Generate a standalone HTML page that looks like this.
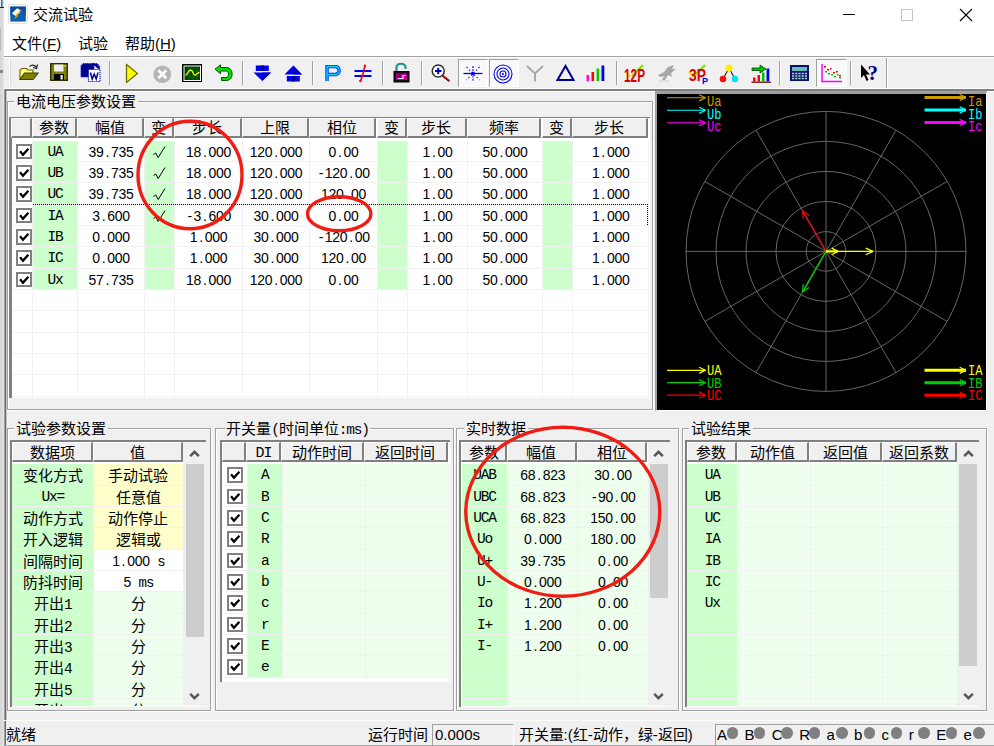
<!DOCTYPE html>
<html lang="zh-CN"><head><meta charset="utf-8"><title>交流试验</title>
<style>
html,body{margin:0;padding:0;overflow:hidden}
body{width:994px;height:746px;position:relative;overflow:hidden;background:#f0f0f0;font-family:"Liberation Sans",sans-serif;font-size:15px;color:#000}
div,svg{position:absolute;box-sizing:border-box}
.c{text-align:center;white-space:nowrap;overflow:hidden}
.l{text-align:left;white-space:nowrap}
.s{font-family:"Liberation Sans",sans-serif;font-size:15px}
.m{font-family:"Liberation Mono",monospace;font-size:14.5px;letter-spacing:-1.2px}
.hd.m{padding-top:1px}
.n{font-family:"Liberation Sans",sans-serif;font-size:14px;letter-spacing:-0.28px}
.n i{display:inline-block;width:7.5px;text-align:center;font-style:normal;white-space:pre}
.n i.m{font-size:14px;letter-spacing:0}
.hd{background:#f0f0f0;border-top:1px solid #fff;border-left:1px solid #fff;border-bottom:2px solid #808080;border-right:2px solid #808080;text-align:center;white-space:nowrap;overflow:hidden;font-size:15px}
.cb{background:#fff;border:2px solid #808080}
</style></head><body>
<div style="left:0px;top:0px;width:4px;height:746px;background:linear-gradient(90deg,#d6d6d6,#dcdcdc 60%,#e8e8e8)"></div>
<div style="left:0px;top:0px;width:4px;height:7px;background:#f4f0d8"></div>
<div style="left:1.2px;top:0px;width:0.7px;height:7px;background:#a0522d"></div>
<div style="left:2.3px;top:0px;width:0.8px;height:7px;background:#6aa8e8"></div>
<div style="left:0px;top:7px;width:4px;height:1px;background:#202020"></div>
<div style="left:0px;top:28px;width:1px;height:22px;background:#f4f4f4;border-right:1px solid #b8b8b8"></div>
<div style="left:0px;top:70px;width:3px;height:3px;background:#888"></div>
<div style="left:4px;top:0px;width:990px;height:56px;background:#fff"></div>
<svg style="left:8px;top:4px" width="20" height="20" viewBox="0 0 20 20">
<rect x="0.5" y="0.5" width="19" height="19" rx="1.5" fill="#fafafa" stroke="#e2e2e2"/>
<rect x="2.3" y="2.6" width="15.5" height="15" fill="#0a62b0"/><rect x="2.3" y="2.6" width="15.5" height="5" fill="#0b4c9b"/><rect x="2.3" y="7.6" width="15.5" height="4" fill="#0b58a6"/>
<path d="M4 9.3 L9.2 4.2 L12.6 6.2 L10.5 9.5 L8.6 12.2 L6 11 Z" fill="#fff"/>
<path d="M15 6 L11.6 8 L12.6 9 L9.2 11 L10.2 12 L6 15 L8.2 11.6 L7.6 10.6 L10.8 8.6 L10.4 7.6 Z" fill="#f7a21b"/>
</svg>
<div class="l s" style="left:33px;top:4px;width:80px;height:22px;line-height:22px;">交流试验</div>
<div style="left:843px;top:14px;width:12px;height:1px;background:#000"></div>
<div style="left:900.8px;top:9px;width:12px;height:12px;border:1px solid #c4c4c4"></div>
<svg style="left:959px;top:8px" width="14" height="14" viewBox="0 0 14 14"><path d="M1 1 L13 13 M13 1 L1 13" stroke="#000" stroke-width="1.1" fill="none"/></svg>
<div class="l s" style="left:12px;top:33px;width:60px;height:22px;line-height:22px;">文件(<u>F</u>)</div>
<div class="l s" style="left:78px;top:33px;width:40px;height:22px;line-height:22px;">试验</div>
<div class="l s" style="left:125px;top:33px;width:60px;height:22px;line-height:22px;">帮助(<u>H</u>)</div>
<div style="left:4px;top:56px;width:990px;height:1px;background:#a0a0a0"></div>
<div style="left:4px;top:57px;width:990px;height:1px;background:#fff"></div>
<div style="left:9px;top:59px;width:1px;height:27px;background:#fff"></div>
<div style="left:10px;top:59px;width:1px;height:27px;background:#dcdcdc"></div>
<div style="left:885.5px;top:58px;width:1px;height:30px;background:#a0a0a0"></div>
<div style="left:886.5px;top:58px;width:1px;height:30px;background:#fff"></div>
<div style="left:109.2px;top:61px;width:1px;height:24px;background:#a0a0a0"></div>
<div style="left:110.2px;top:61px;width:1px;height:24px;background:#fff"></div>
<div style="left:241.5px;top:61px;width:1px;height:24px;background:#a0a0a0"></div>
<div style="left:242.5px;top:61px;width:1px;height:24px;background:#fff"></div>
<div style="left:312px;top:61px;width:1px;height:24px;background:#a0a0a0"></div>
<div style="left:313px;top:61px;width:1px;height:24px;background:#fff"></div>
<div style="left:382px;top:61px;width:1px;height:24px;background:#a0a0a0"></div>
<div style="left:383px;top:61px;width:1px;height:24px;background:#fff"></div>
<div style="left:420.5px;top:61px;width:1px;height:24px;background:#a0a0a0"></div>
<div style="left:421.5px;top:61px;width:1px;height:24px;background:#fff"></div>
<div style="left:615.5px;top:61px;width:1px;height:24px;background:#a0a0a0"></div>
<div style="left:616.5px;top:61px;width:1px;height:24px;background:#fff"></div>
<div style="left:779px;top:61px;width:1px;height:24px;background:#a0a0a0"></div>
<div style="left:780px;top:61px;width:1px;height:24px;background:#fff"></div>
<div style="left:849.5px;top:61px;width:1px;height:24px;background:#a0a0a0"></div>
<div style="left:850.5px;top:61px;width:1px;height:24px;background:#fff"></div>
<div style="left:457.5px;top:58.5px;width:30.5px;height:28.5px;background:#f9f9f9;border-top:1px solid #a0a0a0;border-left:1px solid #a0a0a0;border-right:1px solid #fff;border-bottom:1px solid #fff"></div>
<div style="left:488.5px;top:58.5px;width:30.5px;height:28.5px;background:#f9f9f9;border-top:1px solid #a0a0a0;border-left:1px solid #a0a0a0;border-right:1px solid #fff;border-bottom:1px solid #fff"></div>
<div style="left:815.5px;top:58.5px;width:31px;height:28.5px;background:#f9f9f9;border-top:1px solid #a0a0a0;border-left:1px solid #a0a0a0;border-right:1px solid #fff;border-bottom:1px solid #fff"></div>
<svg style="left:18.5px;top:62.5px" width="20" height="18" viewBox="0 0 20 18"><path d="M1 16.5 L1 7 L3 5.5 L7.5 5.5 L9 7 L14 7 L14 10" fill="#ffff80" stroke="#6b6b00" stroke-width="1.2"/><path d="M1 16.5 L5.5 10 L19 10 L14 16.5 Z" fill="#808000" stroke="#404000" stroke-width="1.2"/><path d="M10.5 3.5 Q14 0.5 17 4" fill="none" stroke="#202020" stroke-width="1.2"/><path d="M18.5 1.5 L17.5 5.5 L14 4.5" fill="none" stroke="#202020" stroke-width="1.2"/></svg>
<svg style="left:50px;top:63px" width="18" height="18" viewBox="0 0 18 18"><rect x="0.7" y="0.7" width="16.6" height="16.6" fill="#808000" stroke="#303000" stroke-width="1.4"/><rect x="4" y="1.5" width="9.5" height="7" fill="#f0f0f0"/><rect x="4" y="11" width="10" height="6" fill="#000"/><rect x="10.5" y="12" width="2.3" height="4.5" fill="#e8e8e8"/><rect x="14.5" y="2" width="1.6" height="1.6" fill="#e0e0e0"/></svg>
<svg style="left:79.5px;top:61.5px" width="22" height="21" viewBox="0 0 22 21"><path d="M3 1.5 L14 1.5 L14 15 L1 15 L1 4 Z" fill="#00008b" stroke="#2020ff" stroke-width="1.2" stroke-dasharray="1.2 0.8"/><path d="M12 1.5 L17 1.5 L19.5 4.5 L19.5 8" fill="#00008b" stroke="#2020ff" stroke-width="1.2" stroke-dasharray="1.2 0.8"/><rect x="8.5" y="7.5" width="11.5" height="12" fill="#fff" stroke="#1010e0" stroke-width="1.2" stroke-dasharray="1.2 0.8"/><path d="M10.5 10.5 L12.2 17 L14.2 12 L16.2 17 L18 10.5" fill="none" stroke="#00008b" stroke-width="1.5"/></svg>
<svg style="left:124.5px;top:62.5px" width="14" height="21" viewBox="0 0 14 21"><path d="M1.5 1.5 L12.5 10.5 L1.5 19.5 Z" fill="#ffff00" stroke="#6b6b00" stroke-width="1.3"/></svg>
<svg style="left:152.5px;top:64.5px" width="19" height="19" viewBox="0 0 19 19"><circle cx="9.3" cy="9.3" r="8.8" fill="#b4b4b4"/><path d="M5.3 5.3 L13.3 13.3 M13.3 5.3 L5.3 13.3" stroke="#fff" stroke-width="2.8" fill="none"/></svg>
<svg style="left:181.5px;top:63.5px" width="20.5" height="18.5" viewBox="0 0 20.5 18.5"><rect x="0" y="0" width="20.5" height="18.5" fill="#000"/><rect x="2" y="2" width="16.5" height="14.5" fill="#004000" stroke="#fff" stroke-width="1"/><path d="M3 7 H18 M3 12 H18 M7 3 V16 M11 3 V16 M15 3 V16" stroke="#008000" stroke-width="0.8"/><path d="M3.5 11 C6 11 6 6 8.5 6 S11 11 13 11 S15 8.5 17.5 8.5" stroke="#ffff00" stroke-width="1.3" fill="none"/></svg>
<svg style="left:213.5px;top:64px" width="19.5" height="18" viewBox="0 0 19.5 18"><path d="M1 5.2 L6.5 0.8 L6.5 3.5 L12.5 3.5 C20 3.5 20 16.5 12.5 16.5 L7.5 16.5 L7.5 13.5 L12 13.5 C15.5 13.5 15.5 7 12 7 L6.5 7 L6.5 9.7 Z" fill="#00e000" stroke="#005000" stroke-width="1"/></svg>
<svg style="left:252.5px;top:65px" width="19" height="17" viewBox="0 0 19 17"><rect x="2.8" y="0.5" width="13" height="5.5" fill="#0000f0"/><rect x="7.5" y="0.5" width="3.5" height="5.5" fill="#000090"/><path d="M0.5 7.5 L18 7.5 L9.3 16 Z" fill="#0000f0"/><path d="M9.3 7.5 L18 7.5 L9.3 16 Z" fill="#0000c0"/></svg>
<svg style="left:283.5px;top:65px" width="19" height="17" viewBox="0 0 19 17"><path d="M0.5 9.5 L18 9.5 L9.3 0.5 Z" fill="#0000f0"/><path d="M9.3 0.5 L18 9.5 L9.3 9.5 Z" fill="#0000c0"/><rect x="2.8" y="11" width="13" height="5.5" fill="#0000f0"/><rect x="7.5" y="11" width="3.5" height="5.5" fill="#000090"/></svg>
<svg style="left:324.5px;top:65px" width="16" height="17" viewBox="0 0 16 17"><path d="M2 16 V1.5 H10 C15.5 1.5 15.5 9.5 10 9.5 H2" fill="none" stroke="#0030ff" stroke-width="3.4"/><path d="M2 16 V1.5 H10 C15.5 1.5 15.5 9.5 10 9.5 H2" fill="none" stroke="#00e0ff" stroke-width="1.3"/></svg>
<svg style="left:353.5px;top:64px" width="18" height="19" viewBox="0 0 18 19"><path d="M0.5 7 H17.5 M0.5 12 H17.5" stroke="#0000f0" stroke-width="2.2"/><path d="M11 1 L9.5 8 L8.5 11 L6.5 17.5" stroke="#f00" stroke-width="1.6" fill="none"/><circle cx="6.3" cy="17" r="1.2" fill="#f00"/><circle cx="11" cy="1.8" r="1.2" fill="#f00"/></svg>
<svg style="left:392.5px;top:62px" width="17" height="20.5" viewBox="0 0 17 20.5"><path d="M3.5 9.5 V5.5 C3.5 0.5 12.5 0.5 12.5 5.5 V7" fill="none" stroke="#209090" stroke-width="2.2"/><rect x="1" y="9.5" width="15" height="10.5" fill="#181018" stroke="#000" stroke-width="1"/><rect x="3" y="11.5" width="11" height="6.5" fill="#c000a0"/><path d="M5 16.5 H10 V13.5 H12.5" stroke="#ffd0ff" stroke-width="1.2" fill="none"/><rect x="4" y="12.5" width="4" height="3" fill="#600050"/></svg>
<svg style="left:430.5px;top:64px" width="20" height="18" viewBox="0 0 20 18"><circle cx="7.2" cy="7" r="6" fill="#fff" stroke="#303030" stroke-width="1.5"/><path d="M4 7 H10.5 M7.2 3.8 V10.2" stroke="#0000c0" stroke-width="2"/><path d="M11.5 11.5 L18.5 17" stroke="#c01010" stroke-width="2.2"/><path d="M11.5 12.2 L17.8 17.5" stroke="#400000" stroke-width="0.8"/></svg>
<svg style="left:462.5px;top:63.5px" width="20" height="19" viewBox="0 0 20 19"><path d="M0.5 9.5 H19.5" stroke="#0000f0" stroke-width="1.3"/><path d="M10 2 V17" stroke="#0000f0" stroke-width="1.1" stroke-dasharray="2 1.2"/><path d="M3.5 3 L16.5 16 M16.5 3 L3.5 16" stroke="#0000f0" stroke-width="1.1" stroke-dasharray="1.4 2.2"/><circle cx="10" cy="9.5" r="1.7" fill="#0000f0"/></svg>
<svg style="left:493px;top:63.5px" width="20" height="20" viewBox="0 0 20 20"><g fill="none" stroke="#0000f0" stroke-width="1.05"><circle cx="10" cy="10" r="9"/><circle cx="10" cy="10" r="6"/><circle cx="10" cy="10" r="3"/></g><circle cx="10" cy="10" r="1" fill="#0000f0"/></svg>
<svg style="left:525.5px;top:64.5px" width="18" height="17" viewBox="0 0 18 17"><path d="M1 1 L9 8.5 L17 1 M9 8.5 V16.5" stroke="#a8a8a8" stroke-width="2" fill="none"/></svg>
<svg style="left:556px;top:64px" width="19" height="18" viewBox="0 0 19 18"><path d="M9.5 2 L17.5 16 H1.5 Z" fill="none" stroke="#000090" stroke-width="2"/></svg>
<svg style="left:585.5px;top:65px" width="20" height="16" viewBox="0 0 20 16"><rect x="0.5" y="10" width="2.6" height="6" fill="#ff00ff"/><rect x="5.5" y="7" width="2.6" height="9" fill="#f00"/><rect x="10.5" y="3.5" width="2.6" height="12.5" fill="#00d000"/><rect x="15.5" y="0.5" width="2.8" height="15.5" fill="#0000f0"/></svg>
<svg style="left:624px;top:63.5px" width="22" height="19" viewBox="0 0 22 19"><path d="M8 12 L19 1" stroke="#80e000" stroke-width="2.2"/><path d="M2 8 L6 13" stroke="#ffe000" stroke-width="2"/><text x="0" y="17.5" font-family="Liberation Sans, sans-serif" font-weight="bold" font-size="17.5" fill="#e00000" textLength="21" lengthAdjust="spacingAndGlyphs">12P</text></svg>
<svg style="left:656.5px;top:64px" width="20" height="18" viewBox="0 0 20 18"><path d="M1 11 L7 8 L11 3 L17 1 L15 5 L19 5 L14 9 L15 13 L11 11 L8 16 L5 16 L7 12 L3 13 Z" fill="#a8a8a8"/><path d="M2 17 H12" stroke="#d8d8d8" stroke-width="1.5"/></svg>
<svg style="left:687.5px;top:63.5px" width="21" height="20" viewBox="0 0 21 20"><path d="M6 12 L17 1" stroke="#80e000" stroke-width="2.2"/><path d="M1 8 L5 13" stroke="#ffe000" stroke-width="2"/><text x="1" y="17" font-family="Liberation Sans, sans-serif" font-weight="bold" font-size="17" fill="#e00000" textLength="17" lengthAdjust="spacingAndGlyphs">3P</text><text x="14" y="20" font-family="Liberation Sans, sans-serif" font-weight="bold" font-size="9" fill="#0000e0">P</text></svg>
<svg style="left:719px;top:63.5px" width="20" height="19" viewBox="0 0 20 19"><path d="M10 4 L4 15 M10 4 L16 15" stroke="#303030" stroke-width="1.2"/><circle cx="10" cy="4" r="3.5" fill="#ffee00"/><circle cx="4" cy="15" r="3.3" fill="#f01010"/><circle cx="16" cy="15" r="3.3" fill="#00e0f0"/></svg>
<svg style="left:750.5px;top:63.5px" width="21" height="19" viewBox="0 0 21 19"><path d="M1 4 H9 V1 L15 5 L9 9 V6.5 H1 Z" fill="#00c000" stroke="#004000" stroke-width="0.8"/><rect x="2" y="13.5" width="2.5" height="4" fill="#f00"/><rect x="6.5" y="11" width="2.5" height="6.5" fill="#f00"/><rect x="11" y="8.5" width="2.5" height="9" fill="#00c000"/><rect x="15.5" y="4.5" width="2.8" height="13" fill="#0000f0"/><path d="M0.5 18.2 H20" stroke="#600000" stroke-width="1.2"/></svg>
<svg style="left:790px;top:65px" width="19" height="16" viewBox="0 0 19 16"><rect x="0" y="0" width="19" height="16" fill="#101060"/><rect x="2" y="2" width="15" height="4" fill="#60c0c0"/><path d="M2 8.5 H17 M2 11 H17 M2 13.5 H17" stroke="#a0d8d8" stroke-width="1.4" stroke-dasharray="2.2 1"/></svg>
<svg style="left:820.5px;top:63px" width="22" height="20" viewBox="0 0 22 20"><path d="M1 1 V18.5 H21" stroke="#ff00ff" stroke-width="1.5" fill="none"/><g fill="#f00"><rect x="3" y="3" width="2" height="1.5"/><rect x="6" y="6" width="2" height="1.5"/><rect x="9" y="5" width="1.5" height="1.5"/><rect x="12" y="9" width="2" height="1.5"/><rect x="15" y="8" width="2" height="1.5"/><rect x="18" y="12" width="2" height="1.5"/></g><g fill="#00c000"><rect x="4" y="8" width="2" height="1.5"/><rect x="7" y="10" width="2" height="1.5"/><rect x="10" y="11" width="2" height="1.5"/><rect x="13" y="13" width="2" height="1.5"/><rect x="16" y="11" width="1.5" height="1.5"/><rect x="18" y="14" width="2" height="1.5"/></g></svg>
<svg style="left:860px;top:63.5px" width="20" height="19" viewBox="0 0 20 19"><path d="M1 0.5 V14 L4 11 L6.5 17 L8.5 16 L6 10.5 L10 10.5 Z" fill="#000"/><text x="7.5" y="15.5" font-family="Liberation Serif, serif" font-weight="bold" font-size="21" fill="#00008b">?</text></svg>
<div style="left:4px;top:88px;width:990px;height:1px;background:#fff"></div>
<div style="left:4px;top:89px;width:990px;height:1px;background:#808080"></div>
<div style="left:4px;top:90px;width:990px;height:1px;background:#808080"></div>
<div style="left:6px;top:91px;width:988px;height:1px;background:#fff"></div>
<div style="left:4px;top:89px;width:1px;height:657px;background:#a0a0a0"></div>
<div style="left:5px;top:89px;width:1px;height:657px;background:#696969"></div>
<div style="left:6px;top:91px;width:1px;height:629px;background:#c8c8c8"></div>
<div style="left:7px;top:101px;width:644.5px;height:1px;background:#a0a0a0"></div>
<div style="left:8px;top:102px;width:643.5px;height:1px;background:#fff"></div>
<div style="left:7px;top:409px;width:645.5px;height:1px;background:#a0a0a0"></div>
<div style="left:7px;top:410px;width:646.5px;height:1px;background:#fff"></div>
<div style="left:7px;top:101px;width:1px;height:308px;background:#a0a0a0"></div>
<div style="left:8px;top:102px;width:1px;height:307px;background:#fff"></div>
<div style="left:651.5px;top:101px;width:1px;height:308px;background:#a0a0a0"></div>
<div style="left:652.5px;top:101px;width:1px;height:309px;background:#fff"></div>
<div class="c s" style="left:14.3px;top:93px;width:124px;height:18px;line-height:18px;background:#f0f0f0">电流电压参数设置</div>
<div style="left:9.4px;top:116.5px;width:640.6px;height:281.5px;background:#fff"></div>
<div style="left:9.4px;top:116.5px;width:640.6px;height:1.8px;background:#808080"></div>
<div style="left:9.4px;top:116.5px;width:2.2px;height:281.5px;background:#808080"></div>
<div class="hd" style="left:11.2px;top:118.3px;width:20.5px;height:19.9px;line-height:19.9px;line-height:18.7px"></div>
<div class="hd" style="left:31.7px;top:118.3px;width:44.9px;height:19.9px;line-height:19.9px;line-height:18.7px">参数</div>
<div class="hd" style="left:76.6px;top:118.3px;width:67.4px;height:19.9px;line-height:19.9px;line-height:18.7px">幅值</div>
<div class="hd" style="left:144px;top:118.3px;width:29.9px;height:19.9px;line-height:19.9px;line-height:18.7px">变</div>
<div class="hd" style="left:173.9px;top:118.3px;width:67.8px;height:19.9px;line-height:19.9px;line-height:18.7px">步长</div>
<div class="hd" style="left:241.7px;top:118.3px;width:67.2px;height:19.9px;line-height:19.9px;line-height:18.7px">上限</div>
<div class="hd" style="left:308.9px;top:118.3px;width:67.6px;height:19.9px;line-height:19.9px;line-height:18.7px">相位</div>
<div class="hd" style="left:376.5px;top:118.3px;width:30.3px;height:19.9px;line-height:19.9px;line-height:18.7px">变</div>
<div class="hd" style="left:406.8px;top:118.3px;width:60.1px;height:19.9px;line-height:19.9px;line-height:18.7px">步长</div>
<div class="hd" style="left:466.9px;top:118.3px;width:74.6px;height:19.9px;line-height:19.9px;line-height:18.7px">频率</div>
<div class="hd" style="left:541.5px;top:118.3px;width:30.5px;height:19.9px;line-height:19.9px;line-height:18.7px">变</div>
<div class="hd" style="left:572px;top:118.3px;width:75.9px;height:19.9px;line-height:19.9px;line-height:18.7px">步长</div>
<div style="left:11.6px;top:140.7px;width:20.5px;height:20.333px;background:#fff"></div>
<div class="cb" style="left:16.3px;top:143.6px;width:15.6px;height:15.8px"><svg style="left:0.7px;top:1.2px" width="10.4" height="10.4" viewBox="0 0 10 10"><path d="M1 4.2 L3.8 7.4 L9 1.6" stroke="#000" stroke-width="2.2" fill="none"/></svg></div>
<div class="c m" style="left:32.8px;top:140.7px;width:44.2px;height:20.333px;line-height:23.633px;background:#ccffcc">UA</div>
<div class="c n" style="left:77.7px;top:140.7px;width:66.7px;height:20.333px;line-height:23.633px;background:#fff">39<i>.</i>735</div>
<div class="c" style="left:145.1px;top:140.7px;width:29.2px;height:20.333px;line-height:23.633px;background:#ccffcc"><svg style="position:relative;vertical-align:-2px" width="15" height="15" viewBox="0 0 15 15"><path d="M1.5 9.5 L3.8 8 L6.2 12.5 L13 1.5" stroke="#000" stroke-width="1" fill="none"/></svg></div>
<div class="c n" style="left:175px;top:140.7px;width:67.1px;height:20.333px;line-height:23.633px;background:#fff">18<i>.</i>000</div>
<div class="c n" style="left:242.8px;top:140.7px;width:66.5px;height:20.333px;line-height:23.633px;background:#fff">120<i>.</i>000</div>
<div class="c n" style="left:310px;top:140.7px;width:66.9px;height:20.333px;line-height:23.633px;background:#fff">0<i>.</i>00</div>
<div class="c m" style="left:377.6px;top:140.7px;width:29.6px;height:20.333px;line-height:23.633px;background:#ccffcc"></div>
<div class="c n" style="left:407.9px;top:140.7px;width:59.4px;height:20.333px;line-height:23.633px;background:#fff">1<i>.</i>00</div>
<div class="c n" style="left:468px;top:140.7px;width:73.9px;height:20.333px;line-height:23.633px;background:#fff">50<i>.</i>000</div>
<div class="c m" style="left:542.6px;top:140.7px;width:29.8px;height:20.333px;line-height:23.633px;background:#ccffcc"></div>
<div class="c n" style="left:573.1px;top:140.7px;width:75.2px;height:20.333px;line-height:23.633px;background:#fff">1<i>.</i>000</div>
<div style="left:11.6px;top:161.033px;width:637.3px;height:1px;background:#f1f1f1"></div>
<div style="left:11.6px;top:162.033px;width:20.5px;height:20.333px;background:#fff"></div>
<div class="cb" style="left:16.3px;top:164.933px;width:15.6px;height:15.8px"><svg style="left:0.7px;top:1.2px" width="10.4" height="10.4" viewBox="0 0 10 10"><path d="M1 4.2 L3.8 7.4 L9 1.6" stroke="#000" stroke-width="2.2" fill="none"/></svg></div>
<div class="c m" style="left:32.8px;top:162.033px;width:44.2px;height:20.333px;line-height:23.633px;background:#ccffcc">UB</div>
<div class="c n" style="left:77.7px;top:162.033px;width:66.7px;height:20.333px;line-height:23.633px;background:#fff">39<i>.</i>735</div>
<div class="c" style="left:145.1px;top:162.033px;width:29.2px;height:20.333px;line-height:23.633px;background:#ccffcc"><svg style="position:relative;vertical-align:-2px" width="15" height="15" viewBox="0 0 15 15"><path d="M1.5 9.5 L3.8 8 L6.2 12.5 L13 1.5" stroke="#000" stroke-width="1" fill="none"/></svg></div>
<div class="c n" style="left:175px;top:162.033px;width:67.1px;height:20.333px;line-height:23.633px;background:#fff">18<i>.</i>000</div>
<div class="c n" style="left:242.8px;top:162.033px;width:66.5px;height:20.333px;line-height:23.633px;background:#fff">120<i>.</i>000</div>
<div class="c n" style="left:310px;top:162.033px;width:66.9px;height:20.333px;line-height:23.633px;background:#fff"><i>-</i>120<i>.</i>00</div>
<div class="c m" style="left:377.6px;top:162.033px;width:29.6px;height:20.333px;line-height:23.633px;background:#ccffcc"></div>
<div class="c n" style="left:407.9px;top:162.033px;width:59.4px;height:20.333px;line-height:23.633px;background:#fff">1<i>.</i>00</div>
<div class="c n" style="left:468px;top:162.033px;width:73.9px;height:20.333px;line-height:23.633px;background:#fff">50<i>.</i>000</div>
<div class="c m" style="left:542.6px;top:162.033px;width:29.8px;height:20.333px;line-height:23.633px;background:#ccffcc"></div>
<div class="c n" style="left:573.1px;top:162.033px;width:75.2px;height:20.333px;line-height:23.633px;background:#fff">1<i>.</i>000</div>
<div style="left:11.6px;top:182.366px;width:637.3px;height:1px;background:#f1f1f1"></div>
<div style="left:11.6px;top:183.366px;width:20.5px;height:20.333px;background:#fff"></div>
<div class="cb" style="left:16.3px;top:186.266px;width:15.6px;height:15.8px"><svg style="left:0.7px;top:1.2px" width="10.4" height="10.4" viewBox="0 0 10 10"><path d="M1 4.2 L3.8 7.4 L9 1.6" stroke="#000" stroke-width="2.2" fill="none"/></svg></div>
<div class="c m" style="left:32.8px;top:183.366px;width:44.2px;height:20.333px;line-height:23.633px;background:#ccffcc">UC</div>
<div class="c n" style="left:77.7px;top:183.366px;width:66.7px;height:20.333px;line-height:23.633px;background:#fff">39<i>.</i>735</div>
<div class="c" style="left:145.1px;top:183.366px;width:29.2px;height:20.333px;line-height:23.633px;background:#ccffcc"><svg style="position:relative;vertical-align:-2px" width="15" height="15" viewBox="0 0 15 15"><path d="M1.5 9.5 L3.8 8 L6.2 12.5 L13 1.5" stroke="#000" stroke-width="1" fill="none"/></svg></div>
<div class="c n" style="left:175px;top:183.366px;width:67.1px;height:20.333px;line-height:23.633px;background:#fff">18<i>.</i>000</div>
<div class="c n" style="left:242.8px;top:183.366px;width:66.5px;height:20.333px;line-height:23.633px;background:#fff">120<i>.</i>000</div>
<div class="c n" style="left:310px;top:183.366px;width:66.9px;height:20.333px;line-height:23.633px;background:#fff">120<i>.</i>00</div>
<div class="c m" style="left:377.6px;top:183.366px;width:29.6px;height:20.333px;line-height:23.633px;background:#ccffcc"></div>
<div class="c n" style="left:407.9px;top:183.366px;width:59.4px;height:20.333px;line-height:23.633px;background:#fff">1<i>.</i>00</div>
<div class="c n" style="left:468px;top:183.366px;width:73.9px;height:20.333px;line-height:23.633px;background:#fff">50<i>.</i>000</div>
<div class="c m" style="left:542.6px;top:183.366px;width:29.8px;height:20.333px;line-height:23.633px;background:#ccffcc"></div>
<div class="c n" style="left:573.1px;top:183.366px;width:75.2px;height:20.333px;line-height:23.633px;background:#fff">1<i>.</i>000</div>
<div style="left:11.6px;top:203.699px;width:637.3px;height:1px;background:#f1f1f1"></div>
<div style="left:11.6px;top:204.699px;width:20.5px;height:20.333px;background:#fff"></div>
<div class="cb" style="left:16.3px;top:207.599px;width:15.6px;height:15.8px"><svg style="left:0.7px;top:1.2px" width="10.4" height="10.4" viewBox="0 0 10 10"><path d="M1 4.2 L3.8 7.4 L9 1.6" stroke="#000" stroke-width="2.2" fill="none"/></svg></div>
<div class="c m" style="left:32.8px;top:204.699px;width:44.2px;height:20.333px;line-height:23.633px;background:#ccffcc">IA</div>
<div class="c n" style="left:77.7px;top:204.699px;width:66.7px;height:20.333px;line-height:23.633px;background:#fff">3<i>.</i>600</div>
<div class="c" style="left:145.1px;top:204.699px;width:29.2px;height:20.333px;line-height:23.633px;background:#ccffcc"><svg style="position:relative;vertical-align:-2px" width="15" height="15" viewBox="0 0 15 15"><path d="M1.5 9.5 L3.8 8 L6.2 12.5 L13 1.5" stroke="#000" stroke-width="1" fill="none"/></svg></div>
<div class="c n" style="left:175px;top:204.699px;width:67.1px;height:20.333px;line-height:23.633px;background:#fff"><i>-</i>3<i>.</i>600</div>
<div class="c n" style="left:242.8px;top:204.699px;width:66.5px;height:20.333px;line-height:23.633px;background:#fff">30<i>.</i>000</div>
<div class="c n" style="left:310px;top:204.699px;width:66.9px;height:20.333px;line-height:23.633px;background:#fff">0<i>.</i>00</div>
<div class="c m" style="left:377.6px;top:204.699px;width:29.6px;height:20.333px;line-height:23.633px;background:#ccffcc"></div>
<div class="c n" style="left:407.9px;top:204.699px;width:59.4px;height:20.333px;line-height:23.633px;background:#fff">1<i>.</i>00</div>
<div class="c n" style="left:468px;top:204.699px;width:73.9px;height:20.333px;line-height:23.633px;background:#fff">50<i>.</i>000</div>
<div class="c m" style="left:542.6px;top:204.699px;width:29.8px;height:20.333px;line-height:23.633px;background:#ccffcc"></div>
<div class="c n" style="left:573.1px;top:204.699px;width:75.2px;height:20.333px;line-height:23.633px;background:#fff">1<i>.</i>000</div>
<div style="left:11.6px;top:225.032px;width:637.3px;height:1px;background:#f1f1f1"></div>
<div style="left:11.6px;top:226.032px;width:20.5px;height:20.333px;background:#fff"></div>
<div class="cb" style="left:16.3px;top:228.932px;width:15.6px;height:15.8px"><svg style="left:0.7px;top:1.2px" width="10.4" height="10.4" viewBox="0 0 10 10"><path d="M1 4.2 L3.8 7.4 L9 1.6" stroke="#000" stroke-width="2.2" fill="none"/></svg></div>
<div class="c m" style="left:32.8px;top:226.032px;width:44.2px;height:20.333px;line-height:23.633px;background:#ccffcc">IB</div>
<div class="c n" style="left:77.7px;top:226.032px;width:66.7px;height:20.333px;line-height:23.633px;background:#fff">0<i>.</i>000</div>
<div class="c m" style="left:145.1px;top:226.032px;width:29.2px;height:20.333px;line-height:23.633px;background:#ccffcc"></div>
<div class="c n" style="left:175px;top:226.032px;width:67.1px;height:20.333px;line-height:23.633px;background:#fff">1<i>.</i>000</div>
<div class="c n" style="left:242.8px;top:226.032px;width:66.5px;height:20.333px;line-height:23.633px;background:#fff">30<i>.</i>000</div>
<div class="c n" style="left:310px;top:226.032px;width:66.9px;height:20.333px;line-height:23.633px;background:#fff"><i>-</i>120<i>.</i>00</div>
<div class="c m" style="left:377.6px;top:226.032px;width:29.6px;height:20.333px;line-height:23.633px;background:#ccffcc"></div>
<div class="c n" style="left:407.9px;top:226.032px;width:59.4px;height:20.333px;line-height:23.633px;background:#fff">1<i>.</i>00</div>
<div class="c n" style="left:468px;top:226.032px;width:73.9px;height:20.333px;line-height:23.633px;background:#fff">50<i>.</i>000</div>
<div class="c m" style="left:542.6px;top:226.032px;width:29.8px;height:20.333px;line-height:23.633px;background:#ccffcc"></div>
<div class="c n" style="left:573.1px;top:226.032px;width:75.2px;height:20.333px;line-height:23.633px;background:#fff">1<i>.</i>000</div>
<div style="left:11.6px;top:246.365px;width:637.3px;height:1px;background:#f1f1f1"></div>
<div style="left:11.6px;top:247.365px;width:20.5px;height:20.333px;background:#fff"></div>
<div class="cb" style="left:16.3px;top:250.265px;width:15.6px;height:15.8px"><svg style="left:0.7px;top:1.2px" width="10.4" height="10.4" viewBox="0 0 10 10"><path d="M1 4.2 L3.8 7.4 L9 1.6" stroke="#000" stroke-width="2.2" fill="none"/></svg></div>
<div class="c m" style="left:32.8px;top:247.365px;width:44.2px;height:20.333px;line-height:23.633px;background:#ccffcc">IC</div>
<div class="c n" style="left:77.7px;top:247.365px;width:66.7px;height:20.333px;line-height:23.633px;background:#fff">0<i>.</i>000</div>
<div class="c m" style="left:145.1px;top:247.365px;width:29.2px;height:20.333px;line-height:23.633px;background:#ccffcc"></div>
<div class="c n" style="left:175px;top:247.365px;width:67.1px;height:20.333px;line-height:23.633px;background:#fff">1<i>.</i>000</div>
<div class="c n" style="left:242.8px;top:247.365px;width:66.5px;height:20.333px;line-height:23.633px;background:#fff">30<i>.</i>000</div>
<div class="c n" style="left:310px;top:247.365px;width:66.9px;height:20.333px;line-height:23.633px;background:#fff">120<i>.</i>00</div>
<div class="c m" style="left:377.6px;top:247.365px;width:29.6px;height:20.333px;line-height:23.633px;background:#ccffcc"></div>
<div class="c n" style="left:407.9px;top:247.365px;width:59.4px;height:20.333px;line-height:23.633px;background:#fff">1<i>.</i>00</div>
<div class="c n" style="left:468px;top:247.365px;width:73.9px;height:20.333px;line-height:23.633px;background:#fff">50<i>.</i>000</div>
<div class="c m" style="left:542.6px;top:247.365px;width:29.8px;height:20.333px;line-height:23.633px;background:#ccffcc"></div>
<div class="c n" style="left:573.1px;top:247.365px;width:75.2px;height:20.333px;line-height:23.633px;background:#fff">1<i>.</i>000</div>
<div style="left:11.6px;top:267.698px;width:637.3px;height:1px;background:#f1f1f1"></div>
<div style="left:11.6px;top:268.698px;width:20.5px;height:20.333px;background:#fff"></div>
<div class="cb" style="left:16.3px;top:271.598px;width:15.6px;height:15.8px"><svg style="left:0.7px;top:1.2px" width="10.4" height="10.4" viewBox="0 0 10 10"><path d="M1 4.2 L3.8 7.4 L9 1.6" stroke="#000" stroke-width="2.2" fill="none"/></svg></div>
<div class="c m" style="left:32.8px;top:268.698px;width:44.2px;height:20.333px;line-height:23.633px;background:#ccffcc">Ux</div>
<div class="c n" style="left:77.7px;top:268.698px;width:66.7px;height:20.333px;line-height:23.633px;background:#fff">57<i>.</i>735</div>
<div class="c m" style="left:145.1px;top:268.698px;width:29.2px;height:20.333px;line-height:23.633px;background:#ccffcc"></div>
<div class="c n" style="left:175px;top:268.698px;width:67.1px;height:20.333px;line-height:23.633px;background:#fff">18<i>.</i>000</div>
<div class="c n" style="left:242.8px;top:268.698px;width:66.5px;height:20.333px;line-height:23.633px;background:#fff">120<i>.</i>000</div>
<div class="c n" style="left:310px;top:268.698px;width:66.9px;height:20.333px;line-height:23.633px;background:#fff">0<i>.</i>00</div>
<div class="c m" style="left:377.6px;top:268.698px;width:29.6px;height:20.333px;line-height:23.633px;background:#ccffcc"></div>
<div class="c n" style="left:407.9px;top:268.698px;width:59.4px;height:20.333px;line-height:23.633px;background:#fff">1<i>.</i>00</div>
<div class="c n" style="left:468px;top:268.698px;width:73.9px;height:20.333px;line-height:23.633px;background:#fff">50<i>.</i>000</div>
<div class="c m" style="left:542.6px;top:268.698px;width:29.8px;height:20.333px;line-height:23.633px;background:#ccffcc"></div>
<div class="c n" style="left:573.1px;top:268.698px;width:75.2px;height:20.333px;line-height:23.633px;background:#fff">1<i>.</i>000</div>
<div style="left:11.6px;top:289.031px;width:637.3px;height:1px;background:#f1f1f1"></div>
<div style="left:11.6px;top:310.364px;width:637.3px;height:1px;background:#f1f1f1"></div>
<div style="left:11.6px;top:331.697px;width:637.3px;height:1px;background:#f1f1f1"></div>
<div style="left:11.6px;top:353.03px;width:637.3px;height:1px;background:#f1f1f1"></div>
<div style="left:11.6px;top:374.363px;width:637.3px;height:1px;background:#f1f1f1"></div>
<div style="left:11.6px;top:395.696px;width:637.3px;height:1px;background:#f1f1f1"></div>
<div style="left:32.1px;top:140.7px;width:0.8px;height:256.6px;background:#f1f1f1"></div>
<div style="left:77px;top:140.7px;width:0.8px;height:256.6px;background:#f1f1f1"></div>
<div style="left:144.4px;top:140.7px;width:0.8px;height:256.6px;background:#f1f1f1"></div>
<div style="left:174.3px;top:140.7px;width:0.8px;height:256.6px;background:#f1f1f1"></div>
<div style="left:242.1px;top:140.7px;width:0.8px;height:256.6px;background:#f1f1f1"></div>
<div style="left:309.3px;top:140.7px;width:0.8px;height:256.6px;background:#f1f1f1"></div>
<div style="left:376.9px;top:140.7px;width:0.8px;height:256.6px;background:#f1f1f1"></div>
<div style="left:407.2px;top:140.7px;width:0.8px;height:256.6px;background:#f1f1f1"></div>
<div style="left:467.3px;top:140.7px;width:0.8px;height:256.6px;background:#f1f1f1"></div>
<div style="left:541.9px;top:140.7px;width:0.8px;height:256.6px;background:#f1f1f1"></div>
<div style="left:572.4px;top:140.7px;width:0.8px;height:256.6px;background:#f1f1f1"></div>
<div style="left:648.3px;top:140.7px;width:0.8px;height:256.6px;background:#f1f1f1"></div>
<div style="left:32.5px;top:204.2px;width:615px;height:21px;border-top:1px dotted #000;border-right:1px dotted #000"></div>
<div style="left:654.5px;top:91px;width:332.2px;height:320px;background:#000;border-top:3px solid #a0a0a0;border-left:2.5px solid #a0a0a0;border-right:1.5px solid #fff;border-bottom:1.5px solid #fff"></div>
<svg style="left:657px;top:94px" width="328.5" height="315.5" viewBox="0 0 328.5 315.5" font-family="Liberation Mono, monospace" font-size="15">
<g stroke="#666666" stroke-width="1" fill="none">
<circle cx="169" cy="157.4" r="19.8"/>
<circle cx="169" cy="157.4" r="50"/>
<circle cx="169" cy="157.4" r="80"/>
<circle cx="169" cy="157.4" r="110"/>
<circle cx="169" cy="157.4" r="140"/>
<line x1="29.0" y1="157.4" x2="309.0" y2="157.4"/>
<line x1="47.8" y1="87.4" x2="290.2" y2="227.4"/>
<line x1="99.0" y1="36.2" x2="239.0" y2="278.6"/>
<line x1="169.0" y1="17.4" x2="169.0" y2="297.4"/>
<line x1="239.0" y1="36.2" x2="99.0" y2="278.6"/>
<line x1="290.2" y1="87.4" x2="47.8" y2="227.4"/>
</g>
<g stroke="#e01010" stroke-width="1.4" fill="none" stroke-linecap="butt"><line x1="169.0" y1="157.4" x2="145.5" y2="116.7"/><line x1="145.5" y1="116.7" x2="152.0" y2="121.4" stroke-width="1.2"/><line x1="145.5" y1="116.7" x2="146.3" y2="124.7" stroke-width="1.2"/></g>
<g stroke="#00d000" stroke-width="1.4" fill="none" stroke-linecap="butt"><line x1="169.0" y1="157.4" x2="145.5" y2="198.1"/><line x1="145.5" y1="198.1" x2="146.3" y2="190.1" stroke-width="1.2"/><line x1="145.5" y1="198.1" x2="152.0" y2="193.4" stroke-width="1.2"/></g>
<g stroke="#ffff00" stroke-width="1.4" fill="none" stroke-linecap="butt"><line x1="169.0" y1="157.4" x2="216.0" y2="157.4"/><line x1="216.0" y1="157.4" x2="208.7" y2="160.7" stroke-width="1.2"/><line x1="216.0" y1="157.4" x2="208.7" y2="154.1" stroke-width="1.2"/></g>
<g stroke="#ffff00" stroke-width="2.2" fill="none" stroke-linecap="butt"><line x1="169.0" y1="157.4" x2="181.0" y2="157.4"/><line x1="181.0" y1="157.4" x2="174.8" y2="160.7" stroke-width="1.2"/><line x1="181.0" y1="157.4" x2="174.8" y2="154.1" stroke-width="1.2"/></g>
<g stroke="#cc9900" stroke-width="1.1" fill="none" stroke-linecap="butt"><line x1="10.0" y1="3.8" x2="48.5" y2="3.8"/><line x1="48.5" y1="3.8" x2="42.2" y2="6.9" stroke-width="1.2"/><line x1="48.5" y1="3.8" x2="42.2" y2="0.7" stroke-width="1.2"/></g>
<text x="50" y="12.200000000000003" fill="#cc9900" textLength="14.5" lengthAdjust="spacingAndGlyphs">Ua</text>
<g stroke="#00ffff" stroke-width="1.1" fill="none" stroke-linecap="butt"><line x1="10.0" y1="16.3" x2="48.5" y2="16.3"/><line x1="48.5" y1="16.3" x2="42.2" y2="19.4" stroke-width="1.2"/><line x1="48.5" y1="16.3" x2="42.2" y2="13.2" stroke-width="1.2"/></g>
<text x="50" y="24.700000000000003" fill="#00ffff" textLength="14.5" lengthAdjust="spacingAndGlyphs">Ub</text>
<g stroke="#ff00ff" stroke-width="1.1" fill="none" stroke-linecap="butt"><line x1="10.0" y1="28.8" x2="48.5" y2="28.8"/><line x1="48.5" y1="28.8" x2="42.2" y2="31.9" stroke-width="1.2"/><line x1="48.5" y1="28.8" x2="42.2" y2="25.7" stroke-width="1.2"/></g>
<text x="50" y="37.19999999999999" fill="#ff00ff" textLength="14.5" lengthAdjust="spacingAndGlyphs">Uc</text>
<g stroke="#cc9900" stroke-width="3" fill="none" stroke-linecap="butt"><line x1="267.5" y1="3.5" x2="309.0" y2="3.5"/><line x1="309.0" y1="3.5" x2="302.7" y2="6.6" stroke-width="1.2"/><line x1="309.0" y1="3.5" x2="302.7" y2="0.4" stroke-width="1.2"/></g>
<text x="311" y="12.200000000000003" fill="#cc9900" textLength="14.5" lengthAdjust="spacingAndGlyphs">Ia</text>
<g stroke="#00ffff" stroke-width="3" fill="none" stroke-linecap="butt"><line x1="267.5" y1="16.0" x2="309.0" y2="16.0"/><line x1="309.0" y1="16.0" x2="302.7" y2="19.1" stroke-width="1.2"/><line x1="309.0" y1="16.0" x2="302.7" y2="12.9" stroke-width="1.2"/></g>
<text x="311" y="24.700000000000003" fill="#00ffff" textLength="14.5" lengthAdjust="spacingAndGlyphs">Ib</text>
<g stroke="#ff00ff" stroke-width="3" fill="none" stroke-linecap="butt"><line x1="267.5" y1="28.5" x2="309.0" y2="28.5"/><line x1="309.0" y1="28.5" x2="302.7" y2="31.6" stroke-width="1.2"/><line x1="309.0" y1="28.5" x2="302.7" y2="25.4" stroke-width="1.2"/></g>
<text x="311" y="37.19999999999999" fill="#ff00ff" textLength="14.5" lengthAdjust="spacingAndGlyphs">Ic</text>
<g stroke="#ffff00" stroke-width="1.3" fill="none" stroke-linecap="butt"><line x1="10.0" y1="276.3" x2="48.5" y2="276.3"/><line x1="48.5" y1="276.3" x2="42.2" y2="279.4" stroke-width="1.2"/><line x1="48.5" y1="276.3" x2="42.2" y2="273.2" stroke-width="1.2"/></g>
<text x="50" y="281" fill="#ffff00" textLength="14.5" lengthAdjust="spacingAndGlyphs">UA</text>
<g stroke="#00d000" stroke-width="1.3" fill="none" stroke-linecap="butt"><line x1="10.0" y1="288.7" x2="48.5" y2="288.7"/><line x1="48.5" y1="288.7" x2="42.2" y2="291.8" stroke-width="1.2"/><line x1="48.5" y1="288.7" x2="42.2" y2="285.6" stroke-width="1.2"/></g>
<text x="50" y="293.5" fill="#00d000" textLength="14.5" lengthAdjust="spacingAndGlyphs">UB</text>
<g stroke="#ff0000" stroke-width="1.3" fill="none" stroke-linecap="butt"><line x1="10.0" y1="301.2" x2="48.5" y2="301.2"/><line x1="48.5" y1="301.2" x2="42.2" y2="304.3" stroke-width="1.2"/><line x1="48.5" y1="301.2" x2="42.2" y2="298.1" stroke-width="1.2"/></g>
<text x="50" y="306" fill="#ff0000" textLength="14.5" lengthAdjust="spacingAndGlyphs">UC</text>
<g stroke="#ffff00" stroke-width="3" fill="none" stroke-linecap="butt"><line x1="267.5" y1="276.3" x2="309.0" y2="276.3"/><line x1="309.0" y1="276.3" x2="302.7" y2="279.4" stroke-width="1.2"/><line x1="309.0" y1="276.3" x2="302.7" y2="273.2" stroke-width="1.2"/></g>
<text x="311" y="281" fill="#ffff00" textLength="14.5" lengthAdjust="spacingAndGlyphs">IA</text>
<g stroke="#00d000" stroke-width="3" fill="none" stroke-linecap="butt"><line x1="267.5" y1="288.7" x2="309.0" y2="288.7"/><line x1="309.0" y1="288.7" x2="302.7" y2="291.8" stroke-width="1.2"/><line x1="309.0" y1="288.7" x2="302.7" y2="285.6" stroke-width="1.2"/></g>
<text x="311" y="293.5" fill="#00d000" textLength="14.5" lengthAdjust="spacingAndGlyphs">IB</text>
<g stroke="#ff0000" stroke-width="3" fill="none" stroke-linecap="butt"><line x1="267.5" y1="301.2" x2="309.0" y2="301.2"/><line x1="309.0" y1="301.2" x2="302.7" y2="304.3" stroke-width="1.2"/><line x1="309.0" y1="301.2" x2="302.7" y2="298.1" stroke-width="1.2"/></g>
<text x="311" y="306" fill="#ff0000" textLength="14.5" lengthAdjust="spacingAndGlyphs">IC</text>
</svg>
<div style="left:7px;top:428px;width:203.3px;height:1px;background:#a0a0a0"></div>
<div style="left:8px;top:429px;width:202.3px;height:1px;background:#fff"></div>
<div style="left:7px;top:710px;width:204.3px;height:1px;background:#a0a0a0"></div>
<div style="left:7px;top:711px;width:205.3px;height:1px;background:#fff"></div>
<div style="left:7px;top:428px;width:1px;height:282px;background:#a0a0a0"></div>
<div style="left:8px;top:429px;width:1px;height:281px;background:#fff"></div>
<div style="left:210.3px;top:428px;width:1px;height:282px;background:#a0a0a0"></div>
<div style="left:211.3px;top:428px;width:1px;height:283px;background:#fff"></div>
<div class="c s" style="left:14.3px;top:420px;width:94px;height:18px;line-height:18px;background:#f0f0f0">试验参数设置</div>
<div style="left:10px;top:440.4px;width:196px;height:266.9px;background:#fff"></div>
<div style="left:10px;top:440.4px;width:196px;height:1.8px;background:#808080"></div>
<div style="left:10px;top:440.4px;width:2.4px;height:266.9px;background:#808080"></div>
<div class="hd" style="left:12.3px;top:442.2px;width:80.45px;height:20.2px;line-height:20.2px;line-height:19px">数据项</div>
<div class="hd" style="left:92.75px;top:442.2px;width:89.85px;height:20.2px;line-height:20.2px;line-height:19px">值</div>
<div class="c s" style="left:12.4px;top:464.3px;width:80.75px;height:20.333px;line-height:23.633px;background:#ccffcc">变化方式</div>
<div class="c s" style="left:93.85px;top:464.3px;width:89.15px;height:20.333px;line-height:23.633px;background:#ffffcc">手动试验</div>
<div style="left:12.4px;top:484.633px;width:171.2px;height:1px;background:#f1f1f1"></div>
<div class="c m" style="left:12.4px;top:485.633px;width:80.75px;height:20.333px;line-height:23.633px;background:#ccffcc">Ux=</div>
<div class="c s" style="left:93.85px;top:485.633px;width:89.15px;height:20.333px;line-height:23.633px;background:#ffffcc">任意值</div>
<div style="left:12.4px;top:505.966px;width:171.2px;height:1px;background:#f1f1f1"></div>
<div class="c s" style="left:12.4px;top:506.966px;width:80.75px;height:20.333px;line-height:23.633px;background:#ccffcc">动作方式</div>
<div class="c s" style="left:93.85px;top:506.966px;width:89.15px;height:20.333px;line-height:23.633px;background:#ffffcc">动作停止</div>
<div style="left:12.4px;top:527.299px;width:171.2px;height:1px;background:#f1f1f1"></div>
<div class="c s" style="left:12.4px;top:528.299px;width:80.75px;height:20.333px;line-height:23.633px;background:#ccffcc">开入逻辑</div>
<div class="c s" style="left:93.85px;top:528.299px;width:89.15px;height:20.333px;line-height:23.633px;background:#ffffcc">逻辑或</div>
<div style="left:12.4px;top:548.632px;width:171.2px;height:1px;background:#f1f1f1"></div>
<div class="c s" style="left:12.4px;top:549.632px;width:80.75px;height:20.333px;line-height:23.633px;background:#ccffcc">间隔时间</div>
<div class="c n" style="left:93.85px;top:549.632px;width:89.15px;height:20.333px;line-height:23.633px;background:#fff">1<i>.</i>000<i> </i><i class="m">s</i></div>
<div style="left:12.4px;top:569.965px;width:171.2px;height:1px;background:#f1f1f1"></div>
<div class="c s" style="left:12.4px;top:570.965px;width:80.75px;height:20.333px;line-height:23.633px;background:#ccffcc">防抖时间</div>
<div class="c n" style="left:93.85px;top:570.965px;width:89.15px;height:20.333px;line-height:23.633px;background:#fff">5<i> </i><i class="m">m</i><i class="m">s</i></div>
<div style="left:12.4px;top:591.298px;width:171.2px;height:1px;background:#f1f1f1"></div>
<div class="c s" style="left:12.4px;top:592.298px;width:80.75px;height:20.333px;line-height:23.633px;background:#ccffcc">开出<span class="m">1</span></div>
<div class="c s" style="left:93.85px;top:592.298px;width:89.15px;height:20.333px;line-height:23.633px;background:#eeffee">分</div>
<div style="left:12.4px;top:612.631px;width:171.2px;height:1px;background:#f1f1f1"></div>
<div class="c s" style="left:12.4px;top:613.631px;width:80.75px;height:20.333px;line-height:23.633px;background:#ccffcc">开出<span class="m">2</span></div>
<div class="c s" style="left:93.85px;top:613.631px;width:89.15px;height:20.333px;line-height:23.633px;background:#eeffee">分</div>
<div style="left:12.4px;top:633.964px;width:171.2px;height:1px;background:#f1f1f1"></div>
<div class="c s" style="left:12.4px;top:634.964px;width:80.75px;height:20.333px;line-height:23.633px;background:#ccffcc">开出<span class="m">3</span></div>
<div class="c s" style="left:93.85px;top:634.964px;width:89.15px;height:20.333px;line-height:23.633px;background:#eeffee">分</div>
<div style="left:12.4px;top:655.297px;width:171.2px;height:1px;background:#f1f1f1"></div>
<div class="c s" style="left:12.4px;top:656.297px;width:80.75px;height:20.333px;line-height:23.633px;background:#ccffcc">开出<span class="m">4</span></div>
<div class="c s" style="left:93.85px;top:656.297px;width:89.15px;height:20.333px;line-height:23.633px;background:#eeffee">分</div>
<div style="left:12.4px;top:676.63px;width:171.2px;height:1px;background:#f1f1f1"></div>
<div class="c s" style="left:12.4px;top:677.63px;width:80.75px;height:20.333px;line-height:23.633px;background:#ccffcc">开出<span class="m">5</span></div>
<div class="c s" style="left:93.85px;top:677.63px;width:89.15px;height:20.333px;line-height:23.633px;background:#eeffee">分</div>
<div style="left:12.4px;top:697.963px;width:171.2px;height:1px;background:#f1f1f1"></div>
<div class="c s" style="left:12.4px;top:698.963px;width:80.75px;height:7.237px;line-height:23.633px;background:#ccffcc">开出<span class="m">6</span></div>
<div class="c s" style="left:93.85px;top:698.963px;width:89.15px;height:7.237px;line-height:23.633px;background:#eeffee">分</div>
<div style="left:93.15px;top:464.3px;width:0.8px;height:241.9px;background:#f1f1f1"></div>
<div style="left:183px;top:464.3px;width:0.8px;height:241.9px;background:#f1f1f1"></div>
<div style="left:183.3px;top:442.2px;width:22.5px;height:264px;background:#f0f0f0"></div>
<div style="left:185.5px;top:464px;width:18.3px;height:172.5px;background:#cdcdcd"></div>
<svg style="left:188.8px;top:449.2px" width="11" height="9" viewBox="0 0 11 9"><path d="M1.2 7.2 L5.5 2.8 L9.8 7.2" stroke="#585858" stroke-width="2.5" fill="none"/></svg>
<svg style="left:188.8px;top:691.7px" width="11" height="9" viewBox="0 0 11 9"><path d="M1.2 1.8 L5.5 6.2 L9.8 1.8" stroke="#585858" stroke-width="2.5" fill="none"/></svg>
<div style="left:215px;top:428px;width:238.4px;height:1px;background:#a0a0a0"></div>
<div style="left:216px;top:429px;width:237.4px;height:1px;background:#fff"></div>
<div style="left:215px;top:710px;width:239.4px;height:1px;background:#a0a0a0"></div>
<div style="left:215px;top:711px;width:240.4px;height:1px;background:#fff"></div>
<div style="left:215px;top:428px;width:1px;height:282px;background:#a0a0a0"></div>
<div style="left:216px;top:429px;width:1px;height:281px;background:#fff"></div>
<div style="left:453.4px;top:428px;width:1px;height:282px;background:#a0a0a0"></div>
<div style="left:454.4px;top:428px;width:1px;height:283px;background:#fff"></div>
<div class="c s" style="left:225px;top:420px;width:145px;height:18px;line-height:18px;background:#f0f0f0">开关量<span class="m" style="position:static">(</span>时间单位<span class="m" style="position:static">:ms)</span></div>
<div style="left:219.6px;top:440.4px;width:230.2px;height:241.6px;background:#fff"></div>
<div style="left:219.6px;top:440.4px;width:230.2px;height:1.8px;background:#808080"></div>
<div style="left:219.6px;top:440.4px;width:2.2px;height:241.6px;background:#808080"></div>
<div class="hd" style="left:221.7px;top:442.2px;width:24.7px;height:20.2px;line-height:20.2px;line-height:19px"></div>
<div class="hd m" style="left:246.4px;top:442.2px;width:35px;height:20.2px;line-height:20.2px;line-height:19px">DI</div>
<div class="hd" style="left:281.4px;top:442.2px;width:82.8px;height:20.2px;line-height:20.2px;line-height:19px">动作时间</div>
<div class="hd" style="left:364.2px;top:442.2px;width:83.4px;height:20.2px;line-height:20.2px;line-height:19px">返回时间</div>
<div style="left:221.8px;top:464.3px;width:25px;height:20.333px;background:#fff"></div>
<div class="cb" style="left:227px;top:467.2px;width:15.6px;height:15.8px"><svg style="left:0.7px;top:1.2px" width="10.4" height="10.4" viewBox="0 0 10 10"><path d="M1 4.2 L3.8 7.4 L9 1.6" stroke="#000" stroke-width="2.2" fill="none"/></svg></div>
<div class="c m" style="left:247.5px;top:464.3px;width:34.3px;height:20.333px;line-height:23.633px;background:#ccffcc">A</div>
<div class="c m" style="left:282.5px;top:464.3px;width:82.1px;height:20.333px;line-height:23.633px;background:#eeffee"></div>
<div class="c m" style="left:365.3px;top:464.3px;width:82.7px;height:20.333px;line-height:23.633px;background:#eeffee"></div>
<div style="left:221.8px;top:484.633px;width:226.8px;height:1px;background:#f1f1f1"></div>
<div style="left:221.8px;top:485.633px;width:25px;height:20.333px;background:#fff"></div>
<div class="cb" style="left:227px;top:488.533px;width:15.6px;height:15.8px"><svg style="left:0.7px;top:1.2px" width="10.4" height="10.4" viewBox="0 0 10 10"><path d="M1 4.2 L3.8 7.4 L9 1.6" stroke="#000" stroke-width="2.2" fill="none"/></svg></div>
<div class="c m" style="left:247.5px;top:485.633px;width:34.3px;height:20.333px;line-height:23.633px;background:#ccffcc">B</div>
<div class="c m" style="left:282.5px;top:485.633px;width:82.1px;height:20.333px;line-height:23.633px;background:#eeffee"></div>
<div class="c m" style="left:365.3px;top:485.633px;width:82.7px;height:20.333px;line-height:23.633px;background:#eeffee"></div>
<div style="left:221.8px;top:505.966px;width:226.8px;height:1px;background:#f1f1f1"></div>
<div style="left:221.8px;top:506.966px;width:25px;height:20.333px;background:#fff"></div>
<div class="cb" style="left:227px;top:509.866px;width:15.6px;height:15.8px"><svg style="left:0.7px;top:1.2px" width="10.4" height="10.4" viewBox="0 0 10 10"><path d="M1 4.2 L3.8 7.4 L9 1.6" stroke="#000" stroke-width="2.2" fill="none"/></svg></div>
<div class="c m" style="left:247.5px;top:506.966px;width:34.3px;height:20.333px;line-height:23.633px;background:#ccffcc">C</div>
<div class="c m" style="left:282.5px;top:506.966px;width:82.1px;height:20.333px;line-height:23.633px;background:#eeffee"></div>
<div class="c m" style="left:365.3px;top:506.966px;width:82.7px;height:20.333px;line-height:23.633px;background:#eeffee"></div>
<div style="left:221.8px;top:527.299px;width:226.8px;height:1px;background:#f1f1f1"></div>
<div style="left:221.8px;top:528.299px;width:25px;height:20.333px;background:#fff"></div>
<div class="cb" style="left:227px;top:531.199px;width:15.6px;height:15.8px"><svg style="left:0.7px;top:1.2px" width="10.4" height="10.4" viewBox="0 0 10 10"><path d="M1 4.2 L3.8 7.4 L9 1.6" stroke="#000" stroke-width="2.2" fill="none"/></svg></div>
<div class="c m" style="left:247.5px;top:528.299px;width:34.3px;height:20.333px;line-height:23.633px;background:#ccffcc">R</div>
<div class="c m" style="left:282.5px;top:528.299px;width:82.1px;height:20.333px;line-height:23.633px;background:#eeffee"></div>
<div class="c m" style="left:365.3px;top:528.299px;width:82.7px;height:20.333px;line-height:23.633px;background:#eeffee"></div>
<div style="left:221.8px;top:548.632px;width:226.8px;height:1px;background:#f1f1f1"></div>
<div style="left:221.8px;top:549.632px;width:25px;height:20.333px;background:#fff"></div>
<div class="cb" style="left:227px;top:552.532px;width:15.6px;height:15.8px"><svg style="left:0.7px;top:1.2px" width="10.4" height="10.4" viewBox="0 0 10 10"><path d="M1 4.2 L3.8 7.4 L9 1.6" stroke="#000" stroke-width="2.2" fill="none"/></svg></div>
<div class="c m" style="left:247.5px;top:549.632px;width:34.3px;height:20.333px;line-height:23.633px;background:#ccffcc">a</div>
<div class="c m" style="left:282.5px;top:549.632px;width:82.1px;height:20.333px;line-height:23.633px;background:#eeffee"></div>
<div class="c m" style="left:365.3px;top:549.632px;width:82.7px;height:20.333px;line-height:23.633px;background:#eeffee"></div>
<div style="left:221.8px;top:569.965px;width:226.8px;height:1px;background:#f1f1f1"></div>
<div style="left:221.8px;top:570.965px;width:25px;height:20.333px;background:#fff"></div>
<div class="cb" style="left:227px;top:573.865px;width:15.6px;height:15.8px"><svg style="left:0.7px;top:1.2px" width="10.4" height="10.4" viewBox="0 0 10 10"><path d="M1 4.2 L3.8 7.4 L9 1.6" stroke="#000" stroke-width="2.2" fill="none"/></svg></div>
<div class="c m" style="left:247.5px;top:570.965px;width:34.3px;height:20.333px;line-height:23.633px;background:#ccffcc">b</div>
<div class="c m" style="left:282.5px;top:570.965px;width:82.1px;height:20.333px;line-height:23.633px;background:#eeffee"></div>
<div class="c m" style="left:365.3px;top:570.965px;width:82.7px;height:20.333px;line-height:23.633px;background:#eeffee"></div>
<div style="left:221.8px;top:591.298px;width:226.8px;height:1px;background:#f1f1f1"></div>
<div style="left:221.8px;top:592.298px;width:25px;height:20.333px;background:#fff"></div>
<div class="cb" style="left:227px;top:595.198px;width:15.6px;height:15.8px"><svg style="left:0.7px;top:1.2px" width="10.4" height="10.4" viewBox="0 0 10 10"><path d="M1 4.2 L3.8 7.4 L9 1.6" stroke="#000" stroke-width="2.2" fill="none"/></svg></div>
<div class="c m" style="left:247.5px;top:592.298px;width:34.3px;height:20.333px;line-height:23.633px;background:#ccffcc">c</div>
<div class="c m" style="left:282.5px;top:592.298px;width:82.1px;height:20.333px;line-height:23.633px;background:#eeffee"></div>
<div class="c m" style="left:365.3px;top:592.298px;width:82.7px;height:20.333px;line-height:23.633px;background:#eeffee"></div>
<div style="left:221.8px;top:612.631px;width:226.8px;height:1px;background:#f1f1f1"></div>
<div style="left:221.8px;top:613.631px;width:25px;height:20.333px;background:#fff"></div>
<div class="cb" style="left:227px;top:616.531px;width:15.6px;height:15.8px"><svg style="left:0.7px;top:1.2px" width="10.4" height="10.4" viewBox="0 0 10 10"><path d="M1 4.2 L3.8 7.4 L9 1.6" stroke="#000" stroke-width="2.2" fill="none"/></svg></div>
<div class="c m" style="left:247.5px;top:613.631px;width:34.3px;height:20.333px;line-height:23.633px;background:#ccffcc">r</div>
<div class="c m" style="left:282.5px;top:613.631px;width:82.1px;height:20.333px;line-height:23.633px;background:#eeffee"></div>
<div class="c m" style="left:365.3px;top:613.631px;width:82.7px;height:20.333px;line-height:23.633px;background:#eeffee"></div>
<div style="left:221.8px;top:633.964px;width:226.8px;height:1px;background:#f1f1f1"></div>
<div style="left:221.8px;top:634.964px;width:25px;height:20.333px;background:#fff"></div>
<div class="cb" style="left:227px;top:637.864px;width:15.6px;height:15.8px"><svg style="left:0.7px;top:1.2px" width="10.4" height="10.4" viewBox="0 0 10 10"><path d="M1 4.2 L3.8 7.4 L9 1.6" stroke="#000" stroke-width="2.2" fill="none"/></svg></div>
<div class="c m" style="left:247.5px;top:634.964px;width:34.3px;height:20.333px;line-height:23.633px;background:#ccffcc">E</div>
<div class="c m" style="left:282.5px;top:634.964px;width:82.1px;height:20.333px;line-height:23.633px;background:#eeffee"></div>
<div class="c m" style="left:365.3px;top:634.964px;width:82.7px;height:20.333px;line-height:23.633px;background:#eeffee"></div>
<div style="left:221.8px;top:655.297px;width:226.8px;height:1px;background:#f1f1f1"></div>
<div style="left:221.8px;top:656.297px;width:25px;height:20.333px;background:#fff"></div>
<div class="cb" style="left:227px;top:659.197px;width:15.6px;height:15.8px"><svg style="left:0.7px;top:1.2px" width="10.4" height="10.4" viewBox="0 0 10 10"><path d="M1 4.2 L3.8 7.4 L9 1.6" stroke="#000" stroke-width="2.2" fill="none"/></svg></div>
<div class="c m" style="left:247.5px;top:656.297px;width:34.3px;height:20.333px;line-height:23.633px;background:#ccffcc">e</div>
<div class="c m" style="left:282.5px;top:656.297px;width:82.1px;height:20.333px;line-height:23.633px;background:#eeffee"></div>
<div class="c m" style="left:365.3px;top:656.297px;width:82.7px;height:20.333px;line-height:23.633px;background:#eeffee"></div>
<div style="left:221.8px;top:676.63px;width:226.8px;height:1px;background:#f1f1f1"></div>
<div style="left:246.8px;top:464.3px;width:0.8px;height:216.7px;background:#f1f1f1"></div>
<div style="left:281.8px;top:464.3px;width:0.8px;height:216.7px;background:#f1f1f1"></div>
<div style="left:364.6px;top:464.3px;width:0.8px;height:216.7px;background:#f1f1f1"></div>
<div style="left:448px;top:464.3px;width:0.8px;height:216.7px;background:#f1f1f1"></div>
<div style="left:456px;top:428px;width:221.8px;height:1px;background:#a0a0a0"></div>
<div style="left:457px;top:429px;width:220.8px;height:1px;background:#fff"></div>
<div style="left:456px;top:710px;width:222.8px;height:1px;background:#a0a0a0"></div>
<div style="left:456px;top:711px;width:223.8px;height:1px;background:#fff"></div>
<div style="left:456px;top:428px;width:1px;height:282px;background:#a0a0a0"></div>
<div style="left:457px;top:429px;width:1px;height:281px;background:#fff"></div>
<div style="left:677.8px;top:428px;width:1px;height:282px;background:#a0a0a0"></div>
<div style="left:678.8px;top:428px;width:1px;height:283px;background:#fff"></div>
<div class="c s" style="left:464px;top:420px;width:64px;height:18px;line-height:18px;background:#f0f0f0">实时数据</div>
<div style="left:459.1px;top:440.4px;width:211.3px;height:266.9px;background:#fff"></div>
<div style="left:459.1px;top:440.4px;width:211.3px;height:1.8px;background:#808080"></div>
<div style="left:459.1px;top:440.4px;width:2.4px;height:266.9px;background:#808080"></div>
<div class="hd" style="left:461.4px;top:442.2px;width:45.5px;height:20.2px;line-height:20.2px;line-height:19px">参数</div>
<div class="hd" style="left:506.9px;top:442.2px;width:70.1px;height:20.2px;line-height:20.2px;line-height:19px">幅值</div>
<div class="hd" style="left:577px;top:442.2px;width:70.3px;height:20.2px;line-height:20.2px;line-height:19px">相位</div>
<div class="c m" style="left:461.5px;top:464.3px;width:45.8px;height:20.333px;line-height:23.633px;background:#ccffcc">UAB</div>
<div class="c n" style="left:508px;top:464.3px;width:69.4px;height:20.333px;line-height:23.633px;background:#eeffee">68<i>.</i>823</div>
<div class="c n" style="left:578.1px;top:464.3px;width:69.6px;height:20.333px;line-height:23.633px;background:#eeffee">30<i>.</i>00</div>
<div style="left:461.5px;top:484.633px;width:186.8px;height:1px;background:#f1f1f1"></div>
<div class="c m" style="left:461.5px;top:485.633px;width:45.8px;height:20.333px;line-height:23.633px;background:#ccffcc">UBC</div>
<div class="c n" style="left:508px;top:485.633px;width:69.4px;height:20.333px;line-height:23.633px;background:#eeffee">68<i>.</i>823</div>
<div class="c n" style="left:578.1px;top:485.633px;width:69.6px;height:20.333px;line-height:23.633px;background:#eeffee"><i>-</i>90<i>.</i>00</div>
<div style="left:461.5px;top:505.966px;width:186.8px;height:1px;background:#f1f1f1"></div>
<div class="c m" style="left:461.5px;top:506.966px;width:45.8px;height:20.333px;line-height:23.633px;background:#ccffcc">UCA</div>
<div class="c n" style="left:508px;top:506.966px;width:69.4px;height:20.333px;line-height:23.633px;background:#eeffee">68<i>.</i>823</div>
<div class="c n" style="left:578.1px;top:506.966px;width:69.6px;height:20.333px;line-height:23.633px;background:#eeffee">150<i>.</i>00</div>
<div style="left:461.5px;top:527.299px;width:186.8px;height:1px;background:#f1f1f1"></div>
<div class="c m" style="left:461.5px;top:528.299px;width:45.8px;height:20.333px;line-height:23.633px;background:#ccffcc">Uo</div>
<div class="c n" style="left:508px;top:528.299px;width:69.4px;height:20.333px;line-height:23.633px;background:#eeffee">0<i>.</i>000</div>
<div class="c n" style="left:578.1px;top:528.299px;width:69.6px;height:20.333px;line-height:23.633px;background:#eeffee">180<i>.</i>00</div>
<div style="left:461.5px;top:548.632px;width:186.8px;height:1px;background:#f1f1f1"></div>
<div class="c m" style="left:461.5px;top:549.632px;width:45.8px;height:20.333px;line-height:23.633px;background:#ccffcc">U+</div>
<div class="c n" style="left:508px;top:549.632px;width:69.4px;height:20.333px;line-height:23.633px;background:#eeffee">39<i>.</i>735</div>
<div class="c n" style="left:578.1px;top:549.632px;width:69.6px;height:20.333px;line-height:23.633px;background:#eeffee">0<i>.</i>00</div>
<div style="left:461.5px;top:569.965px;width:186.8px;height:1px;background:#f1f1f1"></div>
<div class="c m" style="left:461.5px;top:570.965px;width:45.8px;height:20.333px;line-height:23.633px;background:#ccffcc">U-</div>
<div class="c n" style="left:508px;top:570.965px;width:69.4px;height:20.333px;line-height:23.633px;background:#eeffee">0<i>.</i>000</div>
<div class="c n" style="left:578.1px;top:570.965px;width:69.6px;height:20.333px;line-height:23.633px;background:#eeffee">0<i>.</i>00</div>
<div style="left:461.5px;top:591.298px;width:186.8px;height:1px;background:#f1f1f1"></div>
<div class="c m" style="left:461.5px;top:592.298px;width:45.8px;height:20.333px;line-height:23.633px;background:#ccffcc">Io</div>
<div class="c n" style="left:508px;top:592.298px;width:69.4px;height:20.333px;line-height:23.633px;background:#eeffee">1<i>.</i>200</div>
<div class="c n" style="left:578.1px;top:592.298px;width:69.6px;height:20.333px;line-height:23.633px;background:#eeffee">0<i>.</i>00</div>
<div style="left:461.5px;top:612.631px;width:186.8px;height:1px;background:#f1f1f1"></div>
<div class="c m" style="left:461.5px;top:613.631px;width:45.8px;height:20.333px;line-height:23.633px;background:#ccffcc">I+</div>
<div class="c n" style="left:508px;top:613.631px;width:69.4px;height:20.333px;line-height:23.633px;background:#eeffee">1<i>.</i>200</div>
<div class="c n" style="left:578.1px;top:613.631px;width:69.6px;height:20.333px;line-height:23.633px;background:#eeffee">0<i>.</i>00</div>
<div style="left:461.5px;top:633.964px;width:186.8px;height:1px;background:#f1f1f1"></div>
<div class="c m" style="left:461.5px;top:634.964px;width:45.8px;height:20.333px;line-height:23.633px;background:#ccffcc">I-</div>
<div class="c n" style="left:508px;top:634.964px;width:69.4px;height:20.333px;line-height:23.633px;background:#eeffee">1<i>.</i>200</div>
<div class="c n" style="left:578.1px;top:634.964px;width:69.6px;height:20.333px;line-height:23.633px;background:#eeffee">0<i>.</i>00</div>
<div style="left:461.5px;top:655.297px;width:186.8px;height:1px;background:#f1f1f1"></div>
<div class="c m" style="left:461.5px;top:656.297px;width:45.8px;height:20.333px;line-height:23.633px;background:#ccffcc"></div>
<div class="c m" style="left:508px;top:656.297px;width:69.4px;height:20.333px;line-height:23.633px;background:#eeffee"></div>
<div class="c m" style="left:578.1px;top:656.297px;width:69.6px;height:20.333px;line-height:23.633px;background:#eeffee"></div>
<div style="left:461.5px;top:676.63px;width:186.8px;height:1px;background:#f1f1f1"></div>
<div class="c m" style="left:461.5px;top:677.63px;width:45.8px;height:20.333px;line-height:23.633px;background:#ccffcc"></div>
<div class="c m" style="left:508px;top:677.63px;width:69.4px;height:20.333px;line-height:23.633px;background:#eeffee"></div>
<div class="c m" style="left:578.1px;top:677.63px;width:69.6px;height:20.333px;line-height:23.633px;background:#eeffee"></div>
<div style="left:461.5px;top:697.963px;width:186.8px;height:1px;background:#f1f1f1"></div>
<div class="c m" style="left:461.5px;top:698.963px;width:45.8px;height:7.237px;line-height:23.633px;background:#ccffcc"></div>
<div class="c m" style="left:508px;top:698.963px;width:69.4px;height:7.237px;line-height:23.633px;background:#eeffee"></div>
<div class="c m" style="left:578.1px;top:698.963px;width:69.6px;height:7.237px;line-height:23.633px;background:#eeffee"></div>
<div style="left:507.3px;top:464.3px;width:0.8px;height:241.9px;background:#f1f1f1"></div>
<div style="left:577.4px;top:464.3px;width:0.8px;height:241.9px;background:#f1f1f1"></div>
<div style="left:647.7px;top:464.3px;width:0.8px;height:241.9px;background:#f1f1f1"></div>
<div style="left:647.8px;top:442.2px;width:22.5px;height:264px;background:#f0f0f0"></div>
<div style="left:650px;top:464px;width:18.3px;height:134px;background:#cdcdcd"></div>
<svg style="left:653.3px;top:449.2px" width="11" height="9" viewBox="0 0 11 9"><path d="M1.2 7.2 L5.5 2.8 L9.8 7.2" stroke="#585858" stroke-width="2.5" fill="none"/></svg>
<svg style="left:653.3px;top:691.7px" width="11" height="9" viewBox="0 0 11 9"><path d="M1.2 1.8 L5.5 6.2 L9.8 1.8" stroke="#585858" stroke-width="2.5" fill="none"/></svg>
<div style="left:681.5px;top:428px;width:304.5px;height:1px;background:#a0a0a0"></div>
<div style="left:682.5px;top:429px;width:303.5px;height:1px;background:#fff"></div>
<div style="left:681.5px;top:710px;width:305.5px;height:1px;background:#a0a0a0"></div>
<div style="left:681.5px;top:711px;width:306.5px;height:1px;background:#fff"></div>
<div style="left:681.5px;top:428px;width:1px;height:282px;background:#a0a0a0"></div>
<div style="left:682.5px;top:429px;width:1px;height:281px;background:#fff"></div>
<div style="left:986px;top:428px;width:1px;height:282px;background:#a0a0a0"></div>
<div style="left:987px;top:428px;width:1px;height:283px;background:#fff"></div>
<div class="c s" style="left:689px;top:420px;width:64px;height:18px;line-height:18px;background:#f0f0f0">试验结果</div>
<div style="left:684.5px;top:440.4px;width:294.9px;height:266.9px;background:#fff"></div>
<div style="left:684.5px;top:440.4px;width:294.9px;height:1.8px;background:#808080"></div>
<div style="left:684.5px;top:440.4px;width:2.5px;height:266.9px;background:#808080"></div>
<div class="hd" style="left:687px;top:442.2px;width:49.9px;height:20.2px;line-height:20.2px;line-height:19px">参数</div>
<div class="hd" style="left:736.9px;top:442.2px;width:72.5px;height:20.2px;line-height:20.2px;line-height:19px">动作值</div>
<div class="hd" style="left:809.4px;top:442.2px;width:72.4px;height:20.2px;line-height:20.2px;line-height:19px">返回值</div>
<div class="hd" style="left:881.8px;top:442.2px;width:75.2px;height:20.2px;line-height:20.2px;line-height:19px">返回系数</div>
<div class="c m" style="left:687px;top:464.3px;width:50.3px;height:20.333px;line-height:23.633px;background:#ccffcc">UA</div>
<div class="c m" style="left:738px;top:464.3px;width:71.8px;height:20.333px;line-height:23.633px;background:#eeffee"></div>
<div class="c m" style="left:810.5px;top:464.3px;width:71.7px;height:20.333px;line-height:23.633px;background:#eeffee"></div>
<div class="c m" style="left:882.9px;top:464.3px;width:74.5px;height:20.333px;line-height:23.633px;background:#eeffee"></div>
<div style="left:687px;top:484.633px;width:271px;height:1px;background:#f1f1f1"></div>
<div class="c m" style="left:687px;top:485.633px;width:50.3px;height:20.333px;line-height:23.633px;background:#ccffcc">UB</div>
<div class="c m" style="left:738px;top:485.633px;width:71.8px;height:20.333px;line-height:23.633px;background:#eeffee"></div>
<div class="c m" style="left:810.5px;top:485.633px;width:71.7px;height:20.333px;line-height:23.633px;background:#eeffee"></div>
<div class="c m" style="left:882.9px;top:485.633px;width:74.5px;height:20.333px;line-height:23.633px;background:#eeffee"></div>
<div style="left:687px;top:505.966px;width:271px;height:1px;background:#f1f1f1"></div>
<div class="c m" style="left:687px;top:506.966px;width:50.3px;height:20.333px;line-height:23.633px;background:#ccffcc">UC</div>
<div class="c m" style="left:738px;top:506.966px;width:71.8px;height:20.333px;line-height:23.633px;background:#eeffee"></div>
<div class="c m" style="left:810.5px;top:506.966px;width:71.7px;height:20.333px;line-height:23.633px;background:#eeffee"></div>
<div class="c m" style="left:882.9px;top:506.966px;width:74.5px;height:20.333px;line-height:23.633px;background:#eeffee"></div>
<div style="left:687px;top:527.299px;width:271px;height:1px;background:#f1f1f1"></div>
<div class="c m" style="left:687px;top:528.299px;width:50.3px;height:20.333px;line-height:23.633px;background:#ccffcc">IA</div>
<div class="c m" style="left:738px;top:528.299px;width:71.8px;height:20.333px;line-height:23.633px;background:#eeffee"></div>
<div class="c m" style="left:810.5px;top:528.299px;width:71.7px;height:20.333px;line-height:23.633px;background:#eeffee"></div>
<div class="c m" style="left:882.9px;top:528.299px;width:74.5px;height:20.333px;line-height:23.633px;background:#eeffee"></div>
<div style="left:687px;top:548.632px;width:271px;height:1px;background:#f1f1f1"></div>
<div class="c m" style="left:687px;top:549.632px;width:50.3px;height:20.333px;line-height:23.633px;background:#ccffcc">IB</div>
<div class="c m" style="left:738px;top:549.632px;width:71.8px;height:20.333px;line-height:23.633px;background:#eeffee"></div>
<div class="c m" style="left:810.5px;top:549.632px;width:71.7px;height:20.333px;line-height:23.633px;background:#eeffee"></div>
<div class="c m" style="left:882.9px;top:549.632px;width:74.5px;height:20.333px;line-height:23.633px;background:#eeffee"></div>
<div style="left:687px;top:569.965px;width:271px;height:1px;background:#f1f1f1"></div>
<div class="c m" style="left:687px;top:570.965px;width:50.3px;height:20.333px;line-height:23.633px;background:#ccffcc">IC</div>
<div class="c m" style="left:738px;top:570.965px;width:71.8px;height:20.333px;line-height:23.633px;background:#eeffee"></div>
<div class="c m" style="left:810.5px;top:570.965px;width:71.7px;height:20.333px;line-height:23.633px;background:#eeffee"></div>
<div class="c m" style="left:882.9px;top:570.965px;width:74.5px;height:20.333px;line-height:23.633px;background:#eeffee"></div>
<div style="left:687px;top:591.298px;width:271px;height:1px;background:#f1f1f1"></div>
<div class="c m" style="left:687px;top:592.298px;width:50.3px;height:20.333px;line-height:23.633px;background:#ccffcc">Ux</div>
<div class="c m" style="left:738px;top:592.298px;width:71.8px;height:20.333px;line-height:23.633px;background:#eeffee"></div>
<div class="c m" style="left:810.5px;top:592.298px;width:71.7px;height:20.333px;line-height:23.633px;background:#eeffee"></div>
<div class="c m" style="left:882.9px;top:592.298px;width:74.5px;height:20.333px;line-height:23.633px;background:#eeffee"></div>
<div style="left:687px;top:612.631px;width:271px;height:1px;background:#f1f1f1"></div>
<div class="c m" style="left:687px;top:613.631px;width:50.3px;height:20.333px;line-height:23.633px;background:#ccffcc"></div>
<div class="c m" style="left:738px;top:613.631px;width:71.8px;height:20.333px;line-height:23.633px;background:#eeffee"></div>
<div class="c m" style="left:810.5px;top:613.631px;width:71.7px;height:20.333px;line-height:23.633px;background:#eeffee"></div>
<div class="c m" style="left:882.9px;top:613.631px;width:74.5px;height:20.333px;line-height:23.633px;background:#eeffee"></div>
<div style="left:687px;top:633.964px;width:271px;height:1px;background:#f1f1f1"></div>
<div class="c m" style="left:687px;top:634.964px;width:50.3px;height:20.333px;line-height:23.633px;background:#ccffcc"></div>
<div class="c m" style="left:738px;top:634.964px;width:71.8px;height:20.333px;line-height:23.633px;background:#eeffee"></div>
<div class="c m" style="left:810.5px;top:634.964px;width:71.7px;height:20.333px;line-height:23.633px;background:#eeffee"></div>
<div class="c m" style="left:882.9px;top:634.964px;width:74.5px;height:20.333px;line-height:23.633px;background:#eeffee"></div>
<div style="left:687px;top:655.297px;width:271px;height:1px;background:#f1f1f1"></div>
<div class="c m" style="left:687px;top:656.297px;width:50.3px;height:20.333px;line-height:23.633px;background:#ccffcc"></div>
<div class="c m" style="left:738px;top:656.297px;width:71.8px;height:20.333px;line-height:23.633px;background:#eeffee"></div>
<div class="c m" style="left:810.5px;top:656.297px;width:71.7px;height:20.333px;line-height:23.633px;background:#eeffee"></div>
<div class="c m" style="left:882.9px;top:656.297px;width:74.5px;height:20.333px;line-height:23.633px;background:#eeffee"></div>
<div style="left:687px;top:676.63px;width:271px;height:1px;background:#f1f1f1"></div>
<div class="c m" style="left:687px;top:677.63px;width:50.3px;height:20.333px;line-height:23.633px;background:#ccffcc"></div>
<div class="c m" style="left:738px;top:677.63px;width:71.8px;height:20.333px;line-height:23.633px;background:#eeffee"></div>
<div class="c m" style="left:810.5px;top:677.63px;width:71.7px;height:20.333px;line-height:23.633px;background:#eeffee"></div>
<div class="c m" style="left:882.9px;top:677.63px;width:74.5px;height:20.333px;line-height:23.633px;background:#eeffee"></div>
<div style="left:687px;top:697.963px;width:271px;height:1px;background:#f1f1f1"></div>
<div class="c m" style="left:687px;top:698.963px;width:50.3px;height:7.237px;line-height:23.633px;background:#ccffcc"></div>
<div class="c m" style="left:738px;top:698.963px;width:71.8px;height:7.237px;line-height:23.633px;background:#eeffee"></div>
<div class="c m" style="left:810.5px;top:698.963px;width:71.7px;height:7.237px;line-height:23.633px;background:#eeffee"></div>
<div class="c m" style="left:882.9px;top:698.963px;width:74.5px;height:7.237px;line-height:23.633px;background:#eeffee"></div>
<div style="left:737.3px;top:464.3px;width:0.8px;height:241.9px;background:#f1f1f1"></div>
<div style="left:809.8px;top:464.3px;width:0.8px;height:241.9px;background:#f1f1f1"></div>
<div style="left:882.2px;top:464.3px;width:0.8px;height:241.9px;background:#f1f1f1"></div>
<div style="left:957.4px;top:464.3px;width:0.8px;height:241.9px;background:#f1f1f1"></div>
<div style="left:957px;top:442.2px;width:22.5px;height:264px;background:#f0f0f0"></div>
<div style="left:959.2px;top:464px;width:18.3px;height:201.5px;background:#cdcdcd"></div>
<svg style="left:962.5px;top:449.2px" width="11" height="9" viewBox="0 0 11 9"><path d="M1.2 7.2 L5.5 2.8 L9.8 7.2" stroke="#585858" stroke-width="2.5" fill="none"/></svg>
<svg style="left:962.5px;top:691.7px" width="11" height="9" viewBox="0 0 11 9"><path d="M1.2 1.8 L5.5 6.2 L9.8 1.8" stroke="#585858" stroke-width="2.5" fill="none"/></svg>
<div style="left:4px;top:719.5px;width:990px;height:1px;background:#fdfdfd"></div>
<div style="left:4px;top:745px;width:990px;height:1px;background:#a8a8a8"></div>
<div class="l s" style="left:6px;top:724px;width:40px;height:22px;line-height:22px;">就绪</div>
<div class="l s" style="left:368px;top:724px;width:64px;height:22px;line-height:22px;">运行时间</div>
<div style="left:432px;top:723.5px;width:82px;height:22.5px;border-top:1px solid #a0a0a0;border-left:1px solid #a0a0a0;border-right:1px solid #fff"></div>
<div class="l s" style="left:435px;top:724px;width:60px;height:22px;line-height:22px;">0.000s</div>
<div class="l s" style="left:518.5px;top:724px;width:180px;height:22px;line-height:22px;">开关量:(红-动作，绿-返回)</div>
<div style="left:714.5px;top:724px;width:279.5px;height:22px;border-top:1px solid #a0a0a0;border-left:1px solid #a0a0a0"></div>
<div class="l s" style="left:717px;top:725px;width:14px;height:20px;line-height:20px;">A</div>
<div style="left:726.5px;top:727px;width:11.5px;height:11.5px;background:#808080;border-radius:50%"></div>
<div class="l s" style="left:744.4px;top:725px;width:14px;height:20px;line-height:20px;">B</div>
<div style="left:753.9px;top:727px;width:11.5px;height:11.5px;background:#808080;border-radius:50%"></div>
<div class="l s" style="left:771.8px;top:725px;width:14px;height:20px;line-height:20px;">C</div>
<div style="left:781.3px;top:727px;width:11.5px;height:11.5px;background:#808080;border-radius:50%"></div>
<div class="l s" style="left:799.2px;top:725px;width:14px;height:20px;line-height:20px;">R</div>
<div style="left:808.7px;top:727px;width:11.5px;height:11.5px;background:#808080;border-radius:50%"></div>
<div class="l s" style="left:826.6px;top:725px;width:14px;height:20px;line-height:20px;">a</div>
<div style="left:836.1px;top:727px;width:11.5px;height:11.5px;background:#808080;border-radius:50%"></div>
<div class="l s" style="left:854px;top:725px;width:14px;height:20px;line-height:20px;">b</div>
<div style="left:863.5px;top:727px;width:11.5px;height:11.5px;background:#808080;border-radius:50%"></div>
<div class="l s" style="left:881.4px;top:725px;width:14px;height:20px;line-height:20px;">c</div>
<div style="left:890.9px;top:727px;width:11.5px;height:11.5px;background:#808080;border-radius:50%"></div>
<div class="l s" style="left:908.8px;top:725px;width:14px;height:20px;line-height:20px;">r</div>
<div style="left:918.3px;top:727px;width:11.5px;height:11.5px;background:#808080;border-radius:50%"></div>
<div class="l s" style="left:936.2px;top:725px;width:14px;height:20px;line-height:20px;">E</div>
<div style="left:945.7px;top:727px;width:11.5px;height:11.5px;background:#808080;border-radius:50%"></div>
<div class="l s" style="left:963.6px;top:725px;width:14px;height:20px;line-height:20px;">e</div>
<div style="left:973.1px;top:727px;width:11.5px;height:11.5px;background:#808080;border-radius:50%"></div>
<svg style="left:0;top:0" width="994" height="746" viewBox="0 0 994 746"><g fill="none" stroke="#f01d14" stroke-width="3.4"><ellipse cx="190" cy="175" rx="52" ry="53.7"/><ellipse cx="339.2" cy="213.7" rx="31.7" ry="17"/><ellipse cx="562.8" cy="511.7" rx="97" ry="84.5"/></g></svg>
</body></html>
